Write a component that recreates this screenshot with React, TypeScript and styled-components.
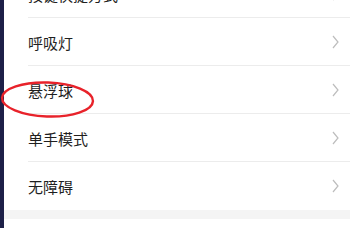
import React from "react";
import styled, { createGlobalStyle } from "styled-components";

const Global = createGlobalStyle`
  html, body { margin: 0; padding: 0; background: #ffffff; }
  body { width: 350px; height: 228px; overflow: hidden; font-family: "Noto Sans CJK SC", "Noto Sans", sans-serif; }
`;

const Page = styled.div`
  position: relative;
  display: flex;
  width: 350px;
  height: 228px;
  overflow: hidden;
  background: #ffffff;
`;

const SideBar = styled.div`
  width: 4px;
  flex: 0 0 4px;
  background: #1d2048;
`;

const Main = styled.div`
  flex: 1;
  display: flex;
  flex-direction: column;
`;

const List = styled.ul`
  list-style: none;
  margin: -30px 0 0 0;
  padding: 0 0 0 24px;
  background: #ffffff;
`;

const Row = styled.li<{ $last?: boolean }>`
  height: ${(p) => (p.$last ? 48 : 47)}px;
  display: flex;
  align-items: center;
  justify-content: space-between;
  padding-right: 11px;
  border-bottom: ${(p) => (p.$last ? "none" : "1px solid #ececec")};
`;

const Label = styled.span`
  font-size: 15px;
  color: #1f1f1f;
  line-height: 1;
  padding-top: 1px;
`;

const Gap = styled.div`
  height: 9px;
  background: #f4f4f4;
`;

const Annotation = styled.svg`
  position: absolute;
  left: 0;
  top: 80px;
  pointer-events: none;
`;

const Chevron = () => (
  <svg width="7" height="14" viewBox="0 0 7 14">
    <polyline points="1,1 6,7 1,13" fill="none" stroke="#bdbdbd" strokeWidth="1.2" />
  </svg>
);

const items = ["按键快捷方式", "呼吸灯", "悬浮球", "单手模式", "无障碍"];

export default function App() {
  return (
    <>
      <Global />
      <Page>
        <SideBar />
        <Main>
          <List>
            {items.map((t, i) => (
              <Row key={t} $last={i === items.length - 1}>
                <Label>{t}</Label>
                <Chevron />
              </Row>
            ))}
          </List>
          <Gap />
        </Main>
        <Annotation width="100" height="42" viewBox="0 0 100 42">
          <ellipse
            cx="47.5"
            cy="19.5"
            rx="45.5"
            ry="17"
            fill="none"
            stroke="#e8222a"
            strokeWidth="2.4"
            transform="rotate(2 47.5 19.5)"
          />
        </Annotation>
      </Page>
    </>
  );
}
